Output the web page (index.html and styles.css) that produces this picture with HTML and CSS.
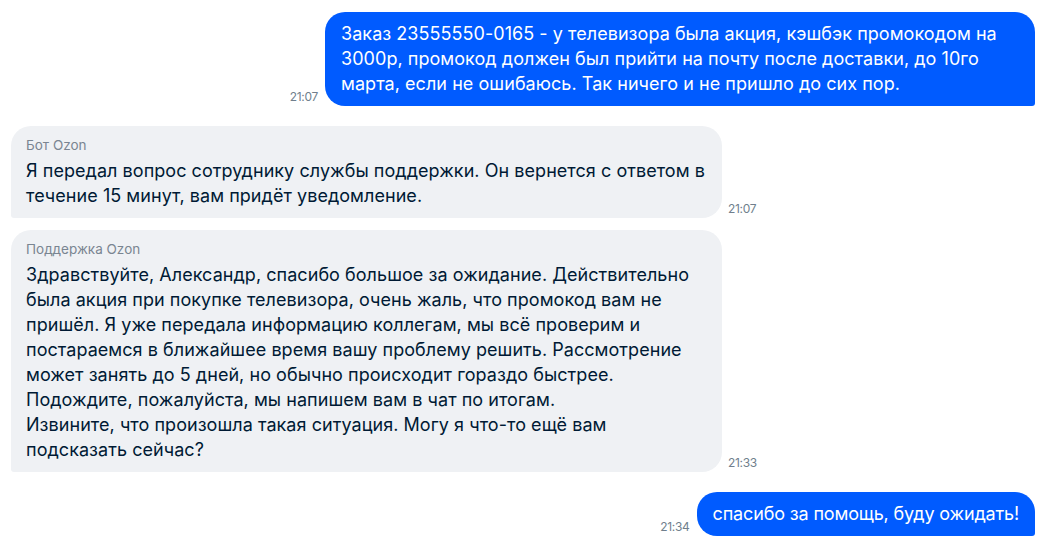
FILE: index.html
```html
<!DOCTYPE html>
<html lang="ru">
<head>
<meta charset="utf-8">
<title>Чат Ozon</title>
<link rel="stylesheet" href="styles.css">
</head>
<body>
<div class="chat">
  <div class="row out">
    <span class="time">21:07</span>
    <div class="bubble blue wide">Заказ 23555550-0165 - у телевизора была акция, кэшбэк промокодом на<br>3000р, промокод должен был прийти на почту после доставки, до 10го<br>марта, если не ошибаюсь. Так ничего и не пришло до сих пор.</div>
  </div>
  <div class="row in">
    <div class="bubble gray">
      <div class="name">Бот Ozon</div>
      <div class="text">Я передал вопрос сотруднику службы поддержки. Он вернется с ответом в<br>течение 15 минут, вам придёт уведомление.</div>
    </div>
    <span class="time">21:07</span>
  </div>
  <div class="row in same">
    <div class="bubble gray">
      <div class="name">Поддержка Ozon</div>
      <div class="text">Здравствуйте, Александр, спасибо большое за ожидание. Действительно<br>была акция при покупке телевизора, очень жаль, что промокод вам не<br>пришёл. Я уже передала информацию коллегам, мы всё проверим и<br>постараемся в ближайшее время вашу проблему решить. Рассмотрение<br>может занять до 5 дней, но обычно происходит гораздо быстрее.<br>Подождите, пожалуйста, мы напишем вам в чат по итогам.<br>Извините, что произошла такая ситуация. Могу я что-то ещё вам<br>подсказать сейчас?</div>
    </div>
    <span class="time">21:33</span>
  </div>
  <div class="row out">
    <span class="time">21:34</span>
    <div class="bubble blue short">спасибо за помощь, буду ожидать!</div>
  </div>
</div>
</body>
</html>
```
FILE: styles.css
```css
html, body {
  margin: 0;
  padding: 0;
  background: #ffffff;
}
body {
  font-family: Inter, "Noto Sans", sans-serif;
  color: #001a34;
}
.chat {
  display: flex;
  flex-direction: column;
  padding: 12px 14px 0 11px;
}
.row {
  display: flex;
  align-items: flex-end;
  margin-top: 20px;
}
.row:first-child {
  margin-top: 0;
}
.row.same {
  margin-top: 12px;
}
.row.out {
  justify-content: flex-end;
  gap: 7px;
}
.row.in {
  justify-content: flex-start;
  gap: 6px;
}
.bubble {
  box-sizing: border-box;
  max-width: 711px;
  font-size: 18px;
  line-height: 25px;
  letter-spacing: 0.05px;
}
.bubble.blue {
  background: #005bff;
  color: #ffffff;
  padding: 9px 16px 10px 16px;
  border-radius: 20px 20px 3px 20px;
}
.bubble.wide {
  width: 710px;
}
.bubble.short {
  letter-spacing: -0.15px;
}
.bubble.gray {
  width: 711px;
  background: #eff1f4;
  color: #001a34;
  padding: 10px 15px 10px 15px;
  border-radius: 20px 20px 20px 3px;
}
.name {
  font-size: 13.5px;
  line-height: 18px;
  color: #7a8591;
  margin-bottom: 4px;
  letter-spacing: 0;
}
.time {
  font-size: 12px;
  line-height: 16px;
  color: #707f8d;
  margin-bottom: 1px;
  letter-spacing: -0.3px;
  white-space: nowrap;
}
```
